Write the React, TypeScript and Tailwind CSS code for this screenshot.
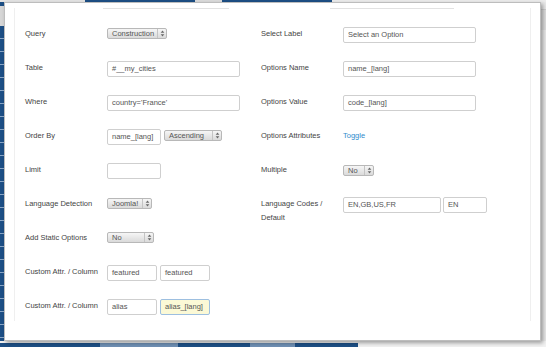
import React from 'react';

const Arrows: React.FC = () => (
  <svg width="5" height="7" viewBox="0 0 5 7" className="shrink-0">
    <path d="M2.5 0.5 L4.3 2.8 L0.7 2.8 Z" fill="#666" />
    <path d="M2.5 6.5 L4.3 4.2 L0.7 4.2 Z" fill="#666" />
  </svg>
);

const Select: React.FC<{ value: string; className: string }> = ({ value, className }) => (
  <div
    className={`mt-[2px] flex h-[11px] items-center rounded-[2px] border border-[#b8b8b8] bg-gradient-to-b from-[#f6f6f6] to-[#dadada] text-[#555] ${className}`}
  >
    <span className="flex-1 pl-[4px] leading-none">{value}</span>
    <span className="flex h-full w-[9px] items-center justify-center border-l border-[#c4c4c4]">
      <Arrows />
    </span>
  </div>
);

const Input: React.FC<{ value?: string; className: string; highlight?: boolean }> = ({ value = '', className, highlight }) => (
  <div
    className={`mt-[1px] flex h-[16px] items-center rounded-[2px] border px-[4px] text-[#555] ${
      highlight ? 'border-[#9dbfe0] bg-[#fbf9d6]' : 'border-[#cfcfcf] bg-white'
    } ${className}`}
  >
    {value}
  </div>
);

const Row: React.FC<{ label: React.ReactNode; children?: React.ReactNode }> = ({ label, children }) => (
  <div className="flex h-[34px] items-start pt-[10px]">
    <div className="mt-[1px] w-[82px] shrink-0 leading-[14px] text-[#444]">{label}</div>
    <div className="flex items-start gap-[3px]">{children}</div>
  </div>
);

const App: React.FC = () => {
  const stripes = Array.from({ length: 24 });

  return (
    <div className="flex h-[347px] w-[546px] flex-col overflow-hidden bg-[#efefef] font-['Liberation_Sans',Arial,sans-serif] text-[7.5px]">
      {/* page behind, top edge */}
      <div className="flex h-[2px] shrink-0">
        <div className="w-[85px] bg-[#e4e4e4]" />
        <div className="w-[110px] bg-[#1d4f85]" />
        <div className="w-[27px] bg-[#dcdcdc]" />
        <div className="w-[110px] bg-[#1d4f85]" />
        <div className="flex-1 bg-[#ececec]" />
      </div>

      <div className="flex h-[339px] shrink-0">
        {/* left edge of the page behind */}
        <div className="flex w-[4px] shrink-0 flex-col bg-[#1d4f85]">
          <div className="h-[4px]" />
          <div className="h-[20px] bg-[#d6d6d6]" />
          {stripes.map((_, i) => (
            <div key={i} className="h-[13px] border-b border-[#8aa6c6]" />
          ))}
        </div>

        {/* modal */}
        <div className="relative z-10 h-[339px] w-[537px] shrink-0 border border-[#bdbdbd] bg-white shadow-[2px_2px_4px_rgba(0,0,0,0.35)]">
          <div className="ml-[9px] mt-[5px] h-[313px] w-[517px] border-x border-[#efefef]">
            <div className="flex h-px">
              <div className="ml-[88px] w-[126px] bg-[#e2e2e2]" />
              <div className="ml-[101px] w-[124px] bg-[#e2e2e2]" />
            </div>

            <div className="mt-[7px] flex pl-[10px]">
              <div className="w-[236px] shrink-0">
                <Row label="Query">
                  <Select value="Construction" className="w-[60px]" />
                </Row>
                <Row label="Table">
                  <Input value="#__my_cities" className="w-[133px]" />
                </Row>
                <Row label="Where">
                  <Input value="country='France'" className="w-[133px]" />
                </Row>
                <Row label="Order By">
                  <Input value="name_[lang]" className="w-[54px]" />
                  <Select value="Ascending" className="mt-[1px] w-[58px]" />
                </Row>
                <Row label="Limit">
                  <Input className="w-[54px]" />
                </Row>
                <Row label="Language Detection">
                  <Select value="Joomla!" className="w-[45px]" />
                </Row>
                <Row label="Add Static Options">
                  <Select value="No" className="w-[47px]" />
                </Row>
                <Row label="Custom Attr. / Column">
                  <Input value="featured" className="w-[50px]" />
                  <Input value="featured" className="w-[50px]" />
                </Row>
                <Row label="Custom Attr. / Column">
                  <Input value="alias" className="w-[50px]" />
                  <Input value="alias_[lang]" className="w-[50px]" highlight />
                </Row>
              </div>

              <div className="w-[236px] shrink-0">
                <Row label="Select Label">
                  <Input value="Select an Option" className="w-[133px]" />
                </Row>
                <Row label="Options Name">
                  <Input value="name_[lang]" className="w-[133px]" />
                </Row>
                <Row label="Options Value">
                  <Input value="code_[lang]" className="w-[133px]" />
                </Row>
                <Row label="Options Attributes">
                  <span className="mt-[1px] leading-[14px] text-[#2f8ccc]">Toggle</span>
                </Row>
                <Row label="Multiple">
                  <Select value="No" className="mt-[3px] w-[31px]" />
                </Row>
                <Row
                  label={
                    <>
                      Language Codes /<br />
                      Default
                    </>
                  }
                >
                  <Input value="EN,GB,US,FR" className="w-[98px]" />
                  <Input value="EN" className="-ml-px w-[44px]" />
                </Row>
              </div>
            </div>
          </div>
        </div>

        {/* right edge of the page behind */}
        <div className="flex flex-1 flex-col bg-[#e9e9e9]">
          <div className="h-[8px] border-b border-[#cfcfcf]" />
          <div className="h-[20px] bg-[#dedede]" />
        </div>
      </div>

      {/* bottom edge of the page behind */}
      <div className="flex h-[6px] shrink-0 flex-col">
        <div className="h-[2px] bg-[#f2f2f2]" />
        <div className="flex h-[4px]">
          <div className="flex w-[358px] bg-[#1d4f85]">
            <div className="ml-[100px] w-[78px] bg-[#6f8fb3]" />
            <div className="ml-[72px] w-[45px] bg-[#6f8fb3]" />
          </div>
          <div className="flex-1 bg-[#f2f2f2]" />
        </div>
      </div>
    </div>
  );
};

export default App;
